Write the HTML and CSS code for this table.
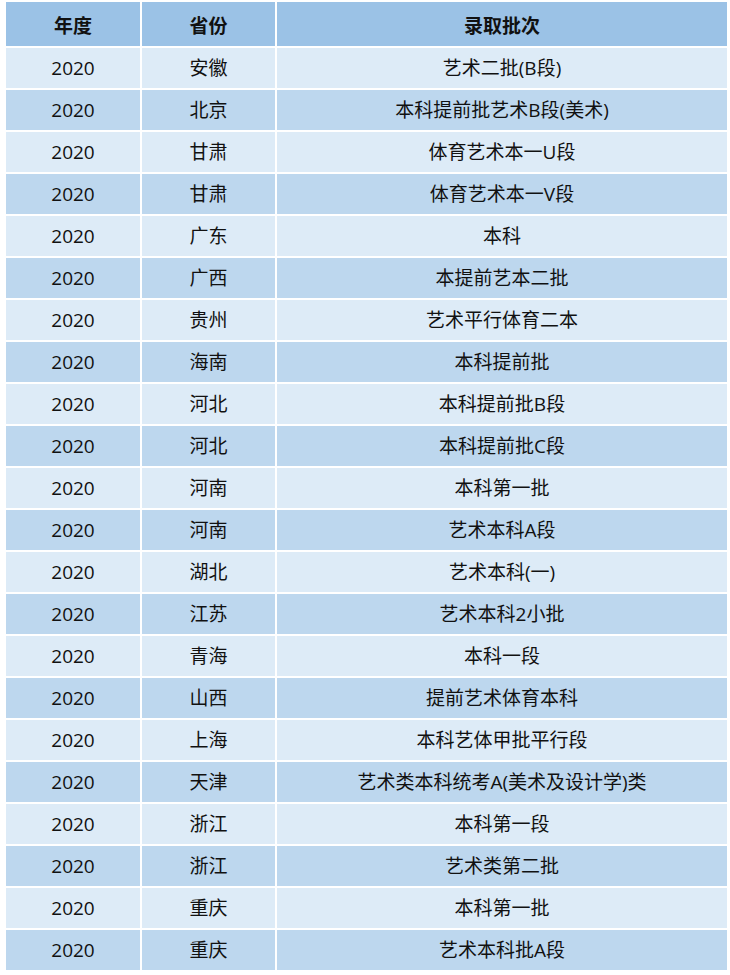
FILE: index.html
```html
<!DOCTYPE html>
<html lang="zh-CN">
<head>
<meta charset="utf-8">
<link rel="stylesheet" href="styles.css">
</head>
<body>
<div class="table">
  <div class="cell head">年度</div><div class="cell head">省份</div><div class="cell head">录取批次</div>
  <div class="cell odd">2020</div><div class="cell odd">安徽</div><div class="cell odd">艺术二批(B段)</div>
  <div class="cell even">2020</div><div class="cell even">北京</div><div class="cell even">本科提前批艺术B段(美术)</div>
  <div class="cell odd">2020</div><div class="cell odd">甘肃</div><div class="cell odd">体育艺术本一U段</div>
  <div class="cell even">2020</div><div class="cell even">甘肃</div><div class="cell even">体育艺术本一V段</div>
  <div class="cell odd">2020</div><div class="cell odd">广东</div><div class="cell odd">本科</div>
  <div class="cell even">2020</div><div class="cell even">广西</div><div class="cell even">本提前艺本二批</div>
  <div class="cell odd">2020</div><div class="cell odd">贵州</div><div class="cell odd">艺术平行体育二本</div>
  <div class="cell even">2020</div><div class="cell even">海南</div><div class="cell even">本科提前批</div>
  <div class="cell odd">2020</div><div class="cell odd">河北</div><div class="cell odd">本科提前批B段</div>
  <div class="cell even">2020</div><div class="cell even">河北</div><div class="cell even">本科提前批C段</div>
  <div class="cell odd">2020</div><div class="cell odd">河南</div><div class="cell odd">本科第一批</div>
  <div class="cell even">2020</div><div class="cell even">河南</div><div class="cell even">艺术本科A段</div>
  <div class="cell odd">2020</div><div class="cell odd">湖北</div><div class="cell odd">艺术本科(一)</div>
  <div class="cell even">2020</div><div class="cell even">江苏</div><div class="cell even">艺术本科2小批</div>
  <div class="cell odd">2020</div><div class="cell odd">青海</div><div class="cell odd">本科一段</div>
  <div class="cell even">2020</div><div class="cell even">山西</div><div class="cell even">提前艺术体育本科</div>
  <div class="cell odd">2020</div><div class="cell odd">上海</div><div class="cell odd">本科艺体甲批平行段</div>
  <div class="cell even">2020</div><div class="cell even">天津</div><div class="cell even">艺术类本科统考A(美术及设计学)类</div>
  <div class="cell odd">2020</div><div class="cell odd">浙江</div><div class="cell odd">本科第一段</div>
  <div class="cell even">2020</div><div class="cell even">浙江</div><div class="cell even">艺术类第二批</div>
  <div class="cell odd">2020</div><div class="cell odd">重庆</div><div class="cell odd">本科第一批</div>
  <div class="cell even">2020</div><div class="cell even">重庆</div><div class="cell even">艺术本科批A段</div>
</div>
</body>
</html>
```

FILE: styles.css
```css
html, body {
  margin: 0;
  padding: 0;
  background: #ffffff;
}

body {
  padding: 2px 3px 0 6px;
  font-family: "Open Sans", "Noto Sans CJK SC", sans-serif;
  font-size: 19px;
  color: #111111;
}

.table {
  display: grid;
  grid-template-columns: 134px 133px 450px;
  grid-template-rows: 44px repeat(22, 40.5px);
  column-gap: 2px;
  row-gap: 1.5px;
  width: 721px;
}

.cell {
  display: flex;
  align-items: center;
  justify-content: center;
  padding-top: 2px;
  box-sizing: border-box;
  line-height: 1;
  white-space: nowrap;
}

.head {
  background: #9bc2e6;
  font-weight: 700;
  font-family: "Noto Sans CJK SC", sans-serif;
  padding-top: 0;
}

.odd {
  background: #ddebf7;
}

.even {
  background: #bdd7ee;
}
```
